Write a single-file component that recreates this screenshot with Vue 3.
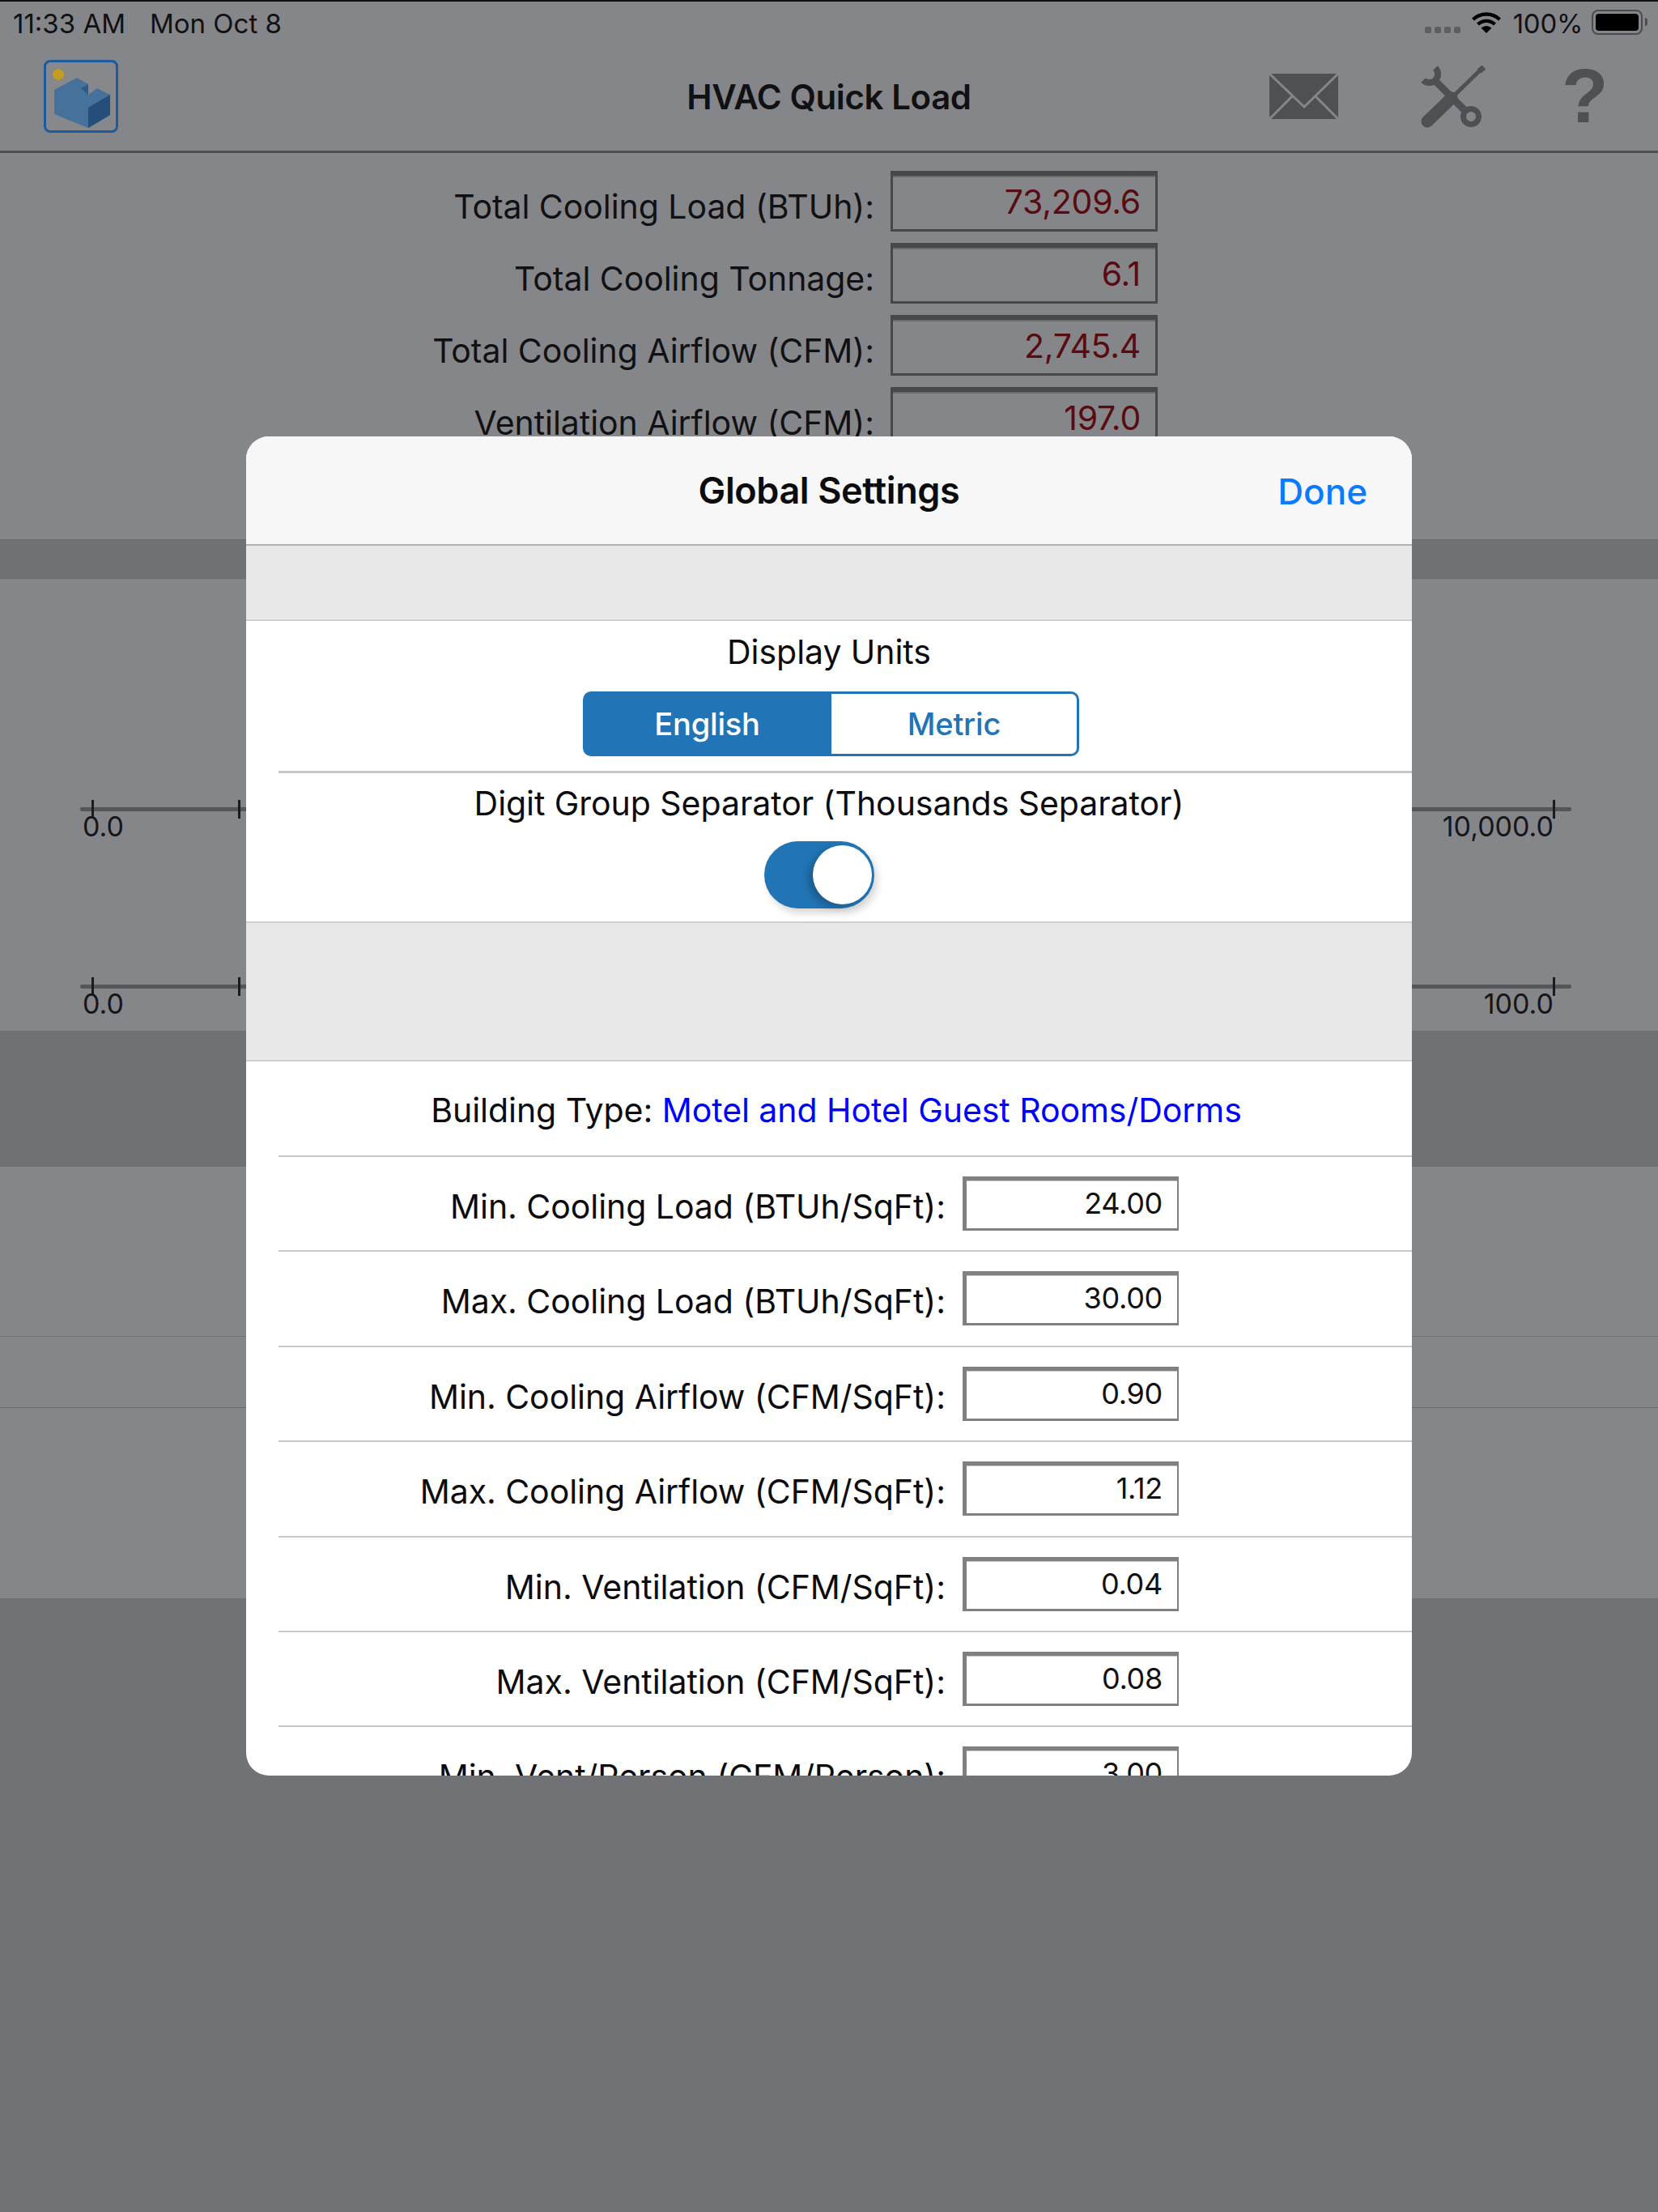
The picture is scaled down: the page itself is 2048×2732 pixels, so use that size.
<template>
  <div class="screen">
    <!-- status bar -->
    <div class="status">
      <div class="status-left">
        <span>11:33 AM</span>
        <span>Mon Oct 8</span>
      </div>
      <div class="status-right">
        <div class="signal"><i></i><i></i><i></i><i></i></div>
        <svg class="wifi" width="36" height="27" viewBox="0 0 36 27">
          <path d="M1.5 10 A24 24 0 0 1 34.5 10" fill="none" stroke="#000" stroke-width="4.4" />
          <path d="M7.5 16 A15.5 15.5 0 0 1 28.5 16" fill="none" stroke="#000" stroke-width="4.4" />
          <path d="M11.5 20.5 Q18 15.5 24.5 20.5 L18 27 Z" fill="#000" />
        </svg>
        <span class="pct">100%</span>
        <div class="battery"><div class="battery-fill"></div></div>
        <div class="battery-tip"></div>
      </div>
    </div>

    <!-- nav bar -->
    <div class="nav">
      <div class="logo">
        <svg width="86" height="84" viewBox="57 78 86 84">
          <circle cx="72" cy="93" r="7" fill="#c39c20" />
          <path d="M67 112 L95 97 L109 105 L109 118 L120 110 L136 118 L136 143 L109 159 L67 142 Z" fill="#46719b" />
          <path d="M109 134 L136 118 L136 143 L109 159 Z" fill="#264e7a" />
          <path d="M100 110 L109 105 L109 118 Z" fill="#2f5a86" />
        </svg>
      </div>
      <div class="nav-title">HVAC Quick Load</div>
      <div class="nav-icons">
        <svg width="85" height="56" viewBox="0 0 85 56">
          <rect width="85" height="56" fill="#4f5054" />
          <path d="M0 0 L43 41 L85 0 M0 56 L29 27 M85 56 L56 27" fill="none" stroke="#85868a" stroke-width="3" />
        </svg>
        <svg class="tools" width="80" height="77" viewBox="0 0 80 77">
          <g fill="none" stroke="#4f5054">
            <path d="M18 3 A10.5 10.5 0 1 1 3 18" stroke-width="8" />
            <path d="M18 19 L55 56" stroke-width="9" />
            <circle cx="62" cy="63" r="9.5" stroke-width="7" />
            <path d="M36 42 L73 6" stroke-width="5" />
            <path d="M72 7 L78 2" stroke-width="7" />
            <path d="M8 69 L38 40" stroke-width="15" stroke-linecap="round" />
          </g>
        </svg>
        <span class="help">?</span>
      </div>
    </div>

    <!-- results behind the sheet -->
    <div class="results">
      <div v-for="r in results" :key="r.label" class="result-row">
        <span class="result-label">{{ r.label }}</span>
        <span class="result-box">{{ r.value }}</span>
      </div>
    </div>

    <div class="band"></div>

    <div class="gauges">
      <div v-for="g in gauges" :key="g" class="gauge">
        <div class="gauge-line"></div>
        <i class="tick tick-a"></i>
        <i class="tick tick-b"></i>
        <i class="tick tick-c"></i>
        <div class="gauge-labels">
          <span>0.0</span>
          <span>{{ g }}</span>
        </div>
      </div>
    </div>

    <div class="band band-tall"></div>

    <div class="lower">
      <div class="lower-a"></div>
      <div class="lower-b"></div>
    </div>

    <div class="rest"></div>

    <!-- settings sheet -->
    <div class="sheet">
      <div class="sheet-head">
        <span class="sheet-title">Global Settings</span>
        <span class="sheet-done">Done</span>
      </div>
      <div class="gap gap-top"></div>
      <div class="sheet-units">
        <div class="units-title">Display Units</div>
        <div class="segment">
          <div class="seg seg-on">English</div>
          <div class="seg seg-off">Metric</div>
        </div>
      </div>
      <div class="sheet-sep">
        <div class="sep-title">Digit Group Separator (Thousands Separator)</div>
        <div class="switch"><div class="knob"></div></div>
      </div>
      <div class="gap gap-mid"></div>
      <div class="building">
        <span>Building Type:&nbsp;</span><span class="link">Motel and Hotel Guest Rooms/Dorms</span>
      </div>
      <div v-for="f in fields" :key="f.label" class="field">
        <span class="field-label">{{ f.label }}</span>
        <span class="field-box">{{ f.value }}</span>
      </div>
    </div>
  </div>
</template>

<script setup>
const results = [
  { label: 'Total Cooling Load (BTUh):', value: '73,209.6' },
  { label: 'Total Cooling Tonnage:', value: '6.1' },
  { label: 'Total Cooling Airflow (CFM):', value: '2,745.4' },
  { label: 'Ventilation Airflow (CFM):', value: '197.0' }
]

const gauges = ['10,000.0', '100.0']

const fields = [
  { label: 'Min. Cooling Load (BTUh/SqFt):', value: '24.00' },
  { label: 'Max. Cooling Load (BTUh/SqFt):', value: '30.00' },
  { label: 'Min. Cooling Airflow (CFM/SqFt):', value: '0.90' },
  { label: 'Max. Cooling Airflow (CFM/SqFt):', value: '1.12' },
  { label: 'Min. Ventilation (CFM/SqFt):', value: '0.04' },
  { label: 'Max. Ventilation (CFM/SqFt):', value: '0.08' },
  { label: 'Min. Vent/Person (CFM/Person):', value: '3.00' }
]
</script>

<style>
html,
body {
  margin: 0;
  background: #717276;
}
</style>

<style scoped>
.screen {
  position: relative;
  width: 2048px;
  height: 2732px;
  overflow: hidden;
  display: flex;
  flex-direction: column;
  background: #85868a;
  font-family: Inter, "Liberation Sans", sans-serif;
  color: #111114;
}

.status {
  box-sizing: border-box;
  height: 50px;
  flex: none;
  display: flex;
  justify-content: space-between;
  padding: 9px 13px 0 16px;
  border-top: 2px solid #111;
  font-size: 33px;
  line-height: 36px;
}

.status-left {
  display: flex;
  gap: 30px;
}

.status-right {
  display: flex;
  align-items: flex-start;
}

.signal {
  display: flex;
  gap: 4px;
  margin-top: 22px;
  margin-right: 14px;
}

.signal i {
  width: 8px;
  height: 8px;
  border-radius: 2px;
  background: #5d5e62;
}

.wifi {
  margin-top: 3px;
  margin-right: 15px;
}

.pct {
  margin-right: 11px;
  letter-spacing: -0.3px;
}

.battery {
  box-sizing: border-box;
  width: 63px;
  height: 31px;
  margin-top: 1px;
  padding: 3px;
  border: 2.5px solid #4c4d51;
  border-radius: 8px;
}

.battery-fill {
  height: 100%;
  border-radius: 4px;
  background: #000;
}

.battery-tip {
  width: 3px;
  height: 10px;
  margin: 11px 0 0 3px;
  border-radius: 0 3px 3px 0;
  background: #4c4d51;
}

.nav {
  box-sizing: border-box;
  height: 139px;
  flex: none;
  display: grid;
  grid-template-columns: 1fr auto 1fr;
  align-items: center;
  padding: 2px 54px 0;
  border-bottom: 3px solid #505155;
}

.logo {
  box-sizing: border-box;
  width: 92px;
  height: 90px;
  display: flex;
  border: 3px solid #1f5a9e;
  border-radius: 8px;
  background: #86888b;
}

.nav-title {
  font-size: 42px;
  font-weight: 600;
  letter-spacing: -0.4px;
}

.nav-icons {
  display: flex;
  justify-content: flex-end;
  align-items: center;
  padding-right: 20px;
}

.tools {
  margin: 0 94px 0 102px;
}

.help {
  width: 45px;
  font-family: "Liberation Sans", sans-serif;
  font-size: 94px;
  line-height: 68px;
  font-weight: 700;
  text-align: center;
  color: #4f5054;
}

.results {
  box-sizing: border-box;
  height: 477px;
  flex: none;
  padding-top: 22px;
  display: flex;
  flex-direction: column;
  gap: 14px;
}

.result-row {
  display: flex;
  gap: 20px;
  height: 75px;
}

.result-label {
  box-sizing: border-box;
  width: 1080px;
  padding-top: 19px;
  font-size: 41px;
  line-height: 50px;
  text-align: right;
  letter-spacing: -0.05px;
}

.result-box {
  box-sizing: border-box;
  width: 330px;
  height: 75px;
  padding: 2px 18px 0 0;
  border: 3px solid #47484c;
  border-top-width: 6px;
  box-shadow: inset 0 2px 0 #6a6b6f;
  font-size: 41px;
  line-height: 60px;
  text-align: right;
  letter-spacing: -0.25px;
  color: #580c12;
}

.band {
  height: 49px;
  flex: none;
  background: #707175;
  border-top: 1px solid #6a6b6f;
  border-bottom: 1px solid #6a6b6f;
  box-sizing: border-box;
}

.band-tall {
  height: 168px;
  border: none;
}

.gauges {
  box-sizing: border-box;
  height: 558px;
  flex: none;
  padding: 273px 0 0 99px;
  display: flex;
  flex-direction: column;
  gap: 174px;
}

.gauge {
  position: relative;
  width: 1842px;
  height: 45px;
}

.gauge-line {
  position: absolute;
  left: 0;
  right: 0;
  top: 9px;
  height: 5px;
  border-radius: 2px;
  background: #55565a;
}

.tick {
  position: absolute;
  top: 0;
  width: 3px;
  height: 23px;
  background: #1b1b1f;
}

.tick-a {
  left: 14px;
}

.tick-b {
  left: 195px;
}

.tick-c {
  left: 1819px;
}

.gauge-labels {
  display: flex;
  justify-content: space-between;
  padding: 15px 22px 0 3px;
  font-size: 34px;
  line-height: 36px;
  color: #16161a;
}

.lower {
  box-sizing: border-box;
  height: 533px;
  flex: none;
}

.lower-a {
  height: 209px;
  border-bottom: 1px solid #6f7074;
}

.lower-b {
  height: 87px;
  border-bottom: 1px solid #6a6b6f;
}

.rest {
  flex: 1;
  background: #717276;
}

.sheet {
  position: absolute;
  left: 304px;
  top: 539px;
  width: 1440px;
  height: 1654px;
  overflow: hidden;
  display: flex;
  flex-direction: column;
  border-radius: 28px;
  background: #fff;
  color: #0c0c0e;
}

.sheet-head {
  box-sizing: border-box;
  height: 135px;
  flex: none;
  position: relative;
  display: flex;
  align-items: center;
  justify-content: center;
  background: #f7f7f7;
  border-bottom: 2px solid #b2b2b2;
}

.sheet-title {
  font-size: 45px;
  font-weight: 600;
  letter-spacing: -0.4px;
}

.sheet-done {
  position: absolute;
  right: 55px;
  top: 44px;
  font-size: 44px;
  line-height: 48px;
  font-weight: 500;
  color: #0a7aff;
}

.gap {
  box-sizing: border-box;
  flex: none;
  background: #e8e8e8;
  border-bottom: 2px solid #cfcfcf;
}

.gap-top {
  height: 93px;
}

.gap-mid {
  height: 173px;
  border-top: 2px solid #cfcfcf;
}

.sheet-units {
  height: 185px;
  flex: none;
  display: flex;
  flex-direction: column;
  align-items: center;
}

.units-title {
  margin-top: 16px;
  font-size: 41px;
  line-height: 44px;
  letter-spacing: -0.05px;
}

.segment {
  display: flex;
  width: 613px;
  height: 80px;
  margin: 27px 0 0 5px;
}

.seg {
  box-sizing: border-box;
  display: flex;
  align-items: center;
  justify-content: center;
  font-size: 38px;
  font-weight: 500;
  letter-spacing: -0.2px;
}

.seg-on {
  width: 307px;
  border-radius: 10px 0 0 10px;
  background: #2175b6;
  color: #fff;
}

.seg-off {
  width: 306px;
  border: 3px solid #2175b6;
  border-left: none;
  border-radius: 0 10px 10px 0;
  color: #2175b6;
}

.sheet-sep {
  box-sizing: border-box;
  height: 186px;
  flex: none;
  display: flex;
  flex-direction: column;
  align-items: center;
  margin-left: 40px;
  border-top: 3px solid #c8c8cc;
}

.sep-title {
  margin: 15px 0 0 -40px;
  font-size: 41px;
  line-height: 44px;
  letter-spacing: -0.05px;
}

.switch {
  box-sizing: border-box;
  width: 136px;
  height: 83px;
  margin: 25px 0 0 -65px;
  padding: 5px 3px;
  display: flex;
  justify-content: flex-end;
  border-radius: 42px;
  background: #2175b6;
  box-shadow: 4px 6px 10px rgba(0, 0, 0, 0.16);
}

.knob {
  width: 73px;
  height: 73px;
  border-radius: 50%;
  background: #fff;
  box-shadow: -6px 4px 10px rgba(0, 0, 0, 0.22);
}

.building {
  box-sizing: border-box;
  height: 116px;
  flex: none;
  display: flex;
  align-items: center;
  justify-content: center;
  margin-left: 40px;
  padding: 4px 22px 0 0;
  font-size: 41px;
  letter-spacing: -0.05px;
}

.link {
  color: #0000ff;
}

.field {
  box-sizing: border-box;
  height: 117.4px;
  flex: none;
  display: flex;
  gap: 21px;
  margin-left: 40px;
  padding-top: 24px;
  border-top: 2px solid #c8c8cc;
}

.field-label {
  box-sizing: border-box;
  width: 824px;
  padding-top: 12px;
  font-size: 41px;
  line-height: 50px;
  text-align: right;
  letter-spacing: -0.05px;
}

.field-box {
  box-sizing: border-box;
  width: 267px;
  height: 67px;
  padding-right: 18px;
  border: solid #808080;
  border-width: 5px 2px 3px 5px;
  box-shadow: inset 0 1px 0 #c4c4c4;
  font-size: 36px;
  line-height: 56px;
  text-align: right;
  letter-spacing: -0.3px;
  color: #111;
}
</style>
